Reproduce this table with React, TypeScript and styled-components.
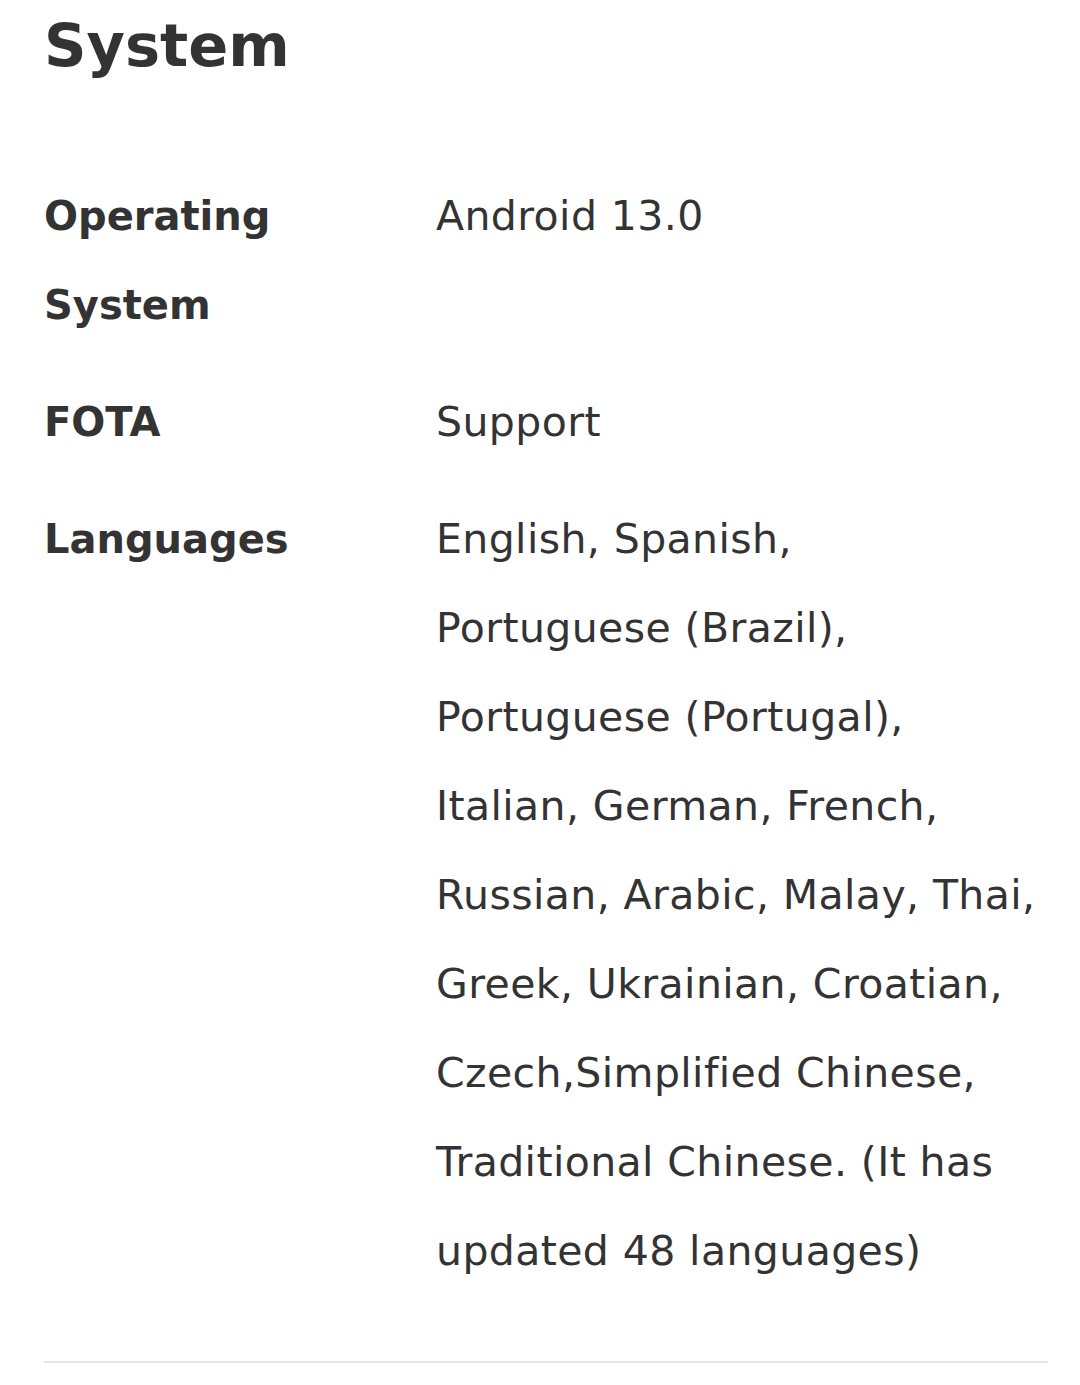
import React from 'react';
import styled, { createGlobalStyle } from 'styled-components';

const GlobalStyle = createGlobalStyle`
  html, body {
    margin: 0;
    padding: 0;
    background: #ffffff;
  }
  body {
    font-family: 'DejaVu Sans', 'Open Sans', sans-serif;
    color: #333333;
  }
`;

type Spec = {
  label: string;
  lines: string[];
};

const specs: Spec[] = [
  { label: 'Operating System', lines: ['Android 13.0'] },
  { label: 'FOTA', lines: ['Support'] },
  {
    label: 'Languages',
    lines: [
      'English, Spanish,',
      'Portuguese (Brazil),',
      'Portuguese (Portugal),',
      'Italian, German, French,',
      'Russian, Arabic, Malay, Thai,',
      'Greek, Ukrainian, Croatian,',
      'Czech,Simplified Chinese,',
      'Traditional Chinese. (It has',
      'updated 48 languages)',
    ],
  },
];

const App: React.FC = () => {
  return (
    <>
      <GlobalStyle />
      <Section>
        <Title>System</Title>
        <SpecList>
          {specs.map((spec) => (
            <Row key={spec.label}>
              <Label>{spec.label}</Label>
              <Value>
                {spec.lines.map((line) => (
                  <Line key={line}>{line}</Line>
                ))}
              </Value>
            </Row>
          ))}
        </SpecList>
        <Divider />
      </Section>
    </>
  );
};

const Section = styled.section`
  padding: 0 32px 0 44px;
`;

const Title = styled.h2`
  margin: 0;
  padding-top: 6px;
  font-size: 59px;
  line-height: 80px;
  font-weight: 700;
  color: #333333;
`;

const SpecList = styled.dl`
  margin: 86px 0 0;
`;

const Row = styled.div`
  display: grid;
  grid-template-columns: 392px 1fr;
  padding-bottom: 28px;
`;

const Label = styled.dt`
  padding-right: 40px;
  font-size: 40px;
  line-height: 89px;
  font-weight: 700;
  color: #333333;
`;

const Value = styled.dd`
  margin: 0;
  font-size: 41px;
  line-height: 89px;
  letter-spacing: 0.4px;
  font-weight: 400;
  color: #333333;
`;

const Line = styled.div`
  white-space: nowrap;
`;

const Divider = styled.hr`
  margin: 37px 0 0;
  border: 0;
  height: 2px;
  background: #e3e3e3;
`;

export default App;
